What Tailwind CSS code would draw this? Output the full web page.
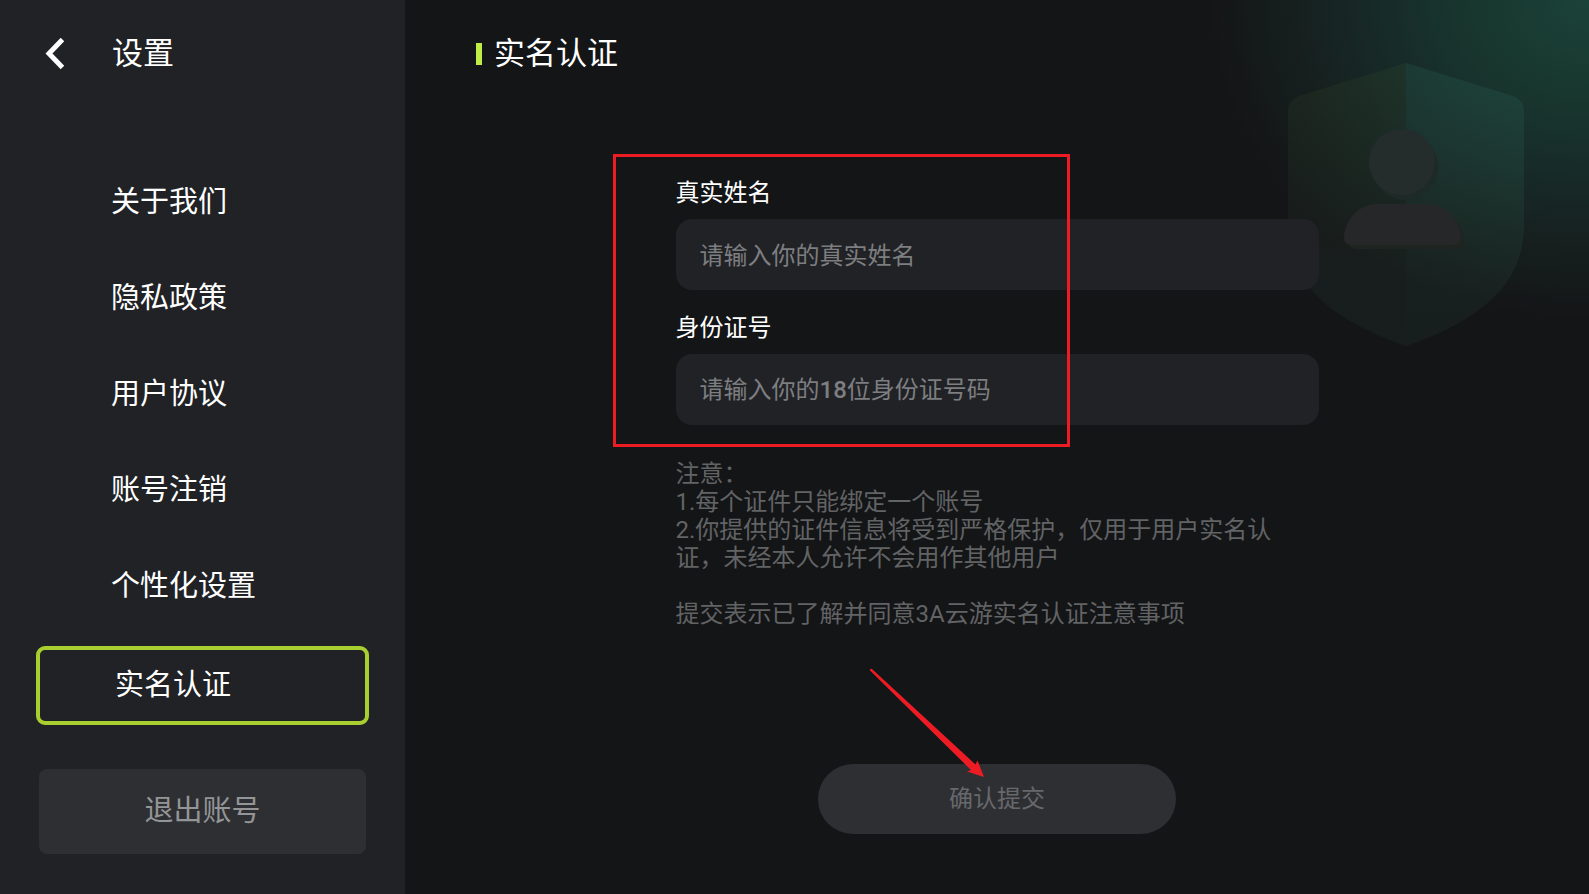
<!DOCTYPE html>
<html lang="zh-CN">

<head>
  <meta charset="UTF-8">
  <meta name="viewport" content="width=device-width, initial-scale=1.0">
  <title>实名认证</title>
  <script src="https://cdn.jsdelivr.net/npm/@tailwindcss/browser@4"></script>
</head>

<body class="flex min-h-screen bg-[#141517] text-white font-['Roboto','Noto_Sans_CJK_SC',sans-serif]">
  <!-- Sidebar -->
  <aside class="w-[405px] shrink-0 bg-[#212226] px-9">
    <header class="flex h-[108px] items-center gap-12 pl-2">
      <button type="button" aria-label="返回">
        <svg class="block h-8 w-5" viewBox="0 0 20 32" fill="none" stroke="#fff" stroke-width="5">
          <path d="M18.5 1.500 L5 15.500 L18.5 29.500" />
        </svg>
      </button>
      <h1 class="text-[31px] leading-10">设置</h1>
    </header>
    <nav class="mt-[47px] flex flex-col text-[29px]">
      <a href="#about" class="flex h-24 items-center pl-[75px]">关于我们</a>
      <a href="#privacy" class="flex h-24 items-center pl-[75px]">隐私政策</a>
      <a href="#terms" class="flex h-24 items-center pl-[75px]">用户协议</a>
      <a href="#cancel" class="flex h-24 items-center pl-[75px]">账号注销</a>
      <a href="#custom" class="flex h-24 items-center pl-[75px]">个性化设置</a>
      <a href="#realname" aria-current="page" class="mt-[11px] flex h-[79px] items-center rounded-[9px] border-4 border-[#a8cf2f] pl-[75px]">实名认证</a>
    </nav>
    <div class="mt-11 px-[3px]">
      <button type="button" class="h-[85px] w-full rounded-lg bg-[#2e2f33] text-[29px] text-[#949597]">退出账号</button>
    </div>
  </aside>

  <!-- Content -->
  <main class="relative flex-1 overflow-hidden">
    <!-- Glow and shield in the corner -->
    <div class="absolute top-0 right-0 h-[330px] w-[400px] bg-[radial-gradient(ellipse_380px_320px_at_100%_0%,#1b4239_0%,#18382f_28%,#172a28_56%,#161f1e_78%,#141517_100%)]"></div>
    <svg class="absolute top-[62px] right-16 h-[285px] w-[238px]" viewBox="0 0 238 285" aria-hidden="true">
      <defs>
        <linearGradient id="shieldLeft" x1="0" y1="0" x2="0" y2="1">
          <stop offset="0" stop-color="#4a6428" stop-opacity=".13" />
          <stop offset=".45" stop-color="#3c6440" stop-opacity=".1" />
          <stop offset="1" stop-color="#346c58" stop-opacity=".1" />
        </linearGradient>
        <linearGradient id="shieldRight" x1="0" y1="0" x2="0" y2="1">
          <stop offset="0" stop-color="#3c9080" stop-opacity=".14" />
          <stop offset=".5" stop-color="#3c8060" stop-opacity=".13" />
          <stop offset="1" stop-color="#346c58" stop-opacity=".1" />
        </linearGradient>
      </defs>
      <path d="M119 1 L12 34 Q1 38 1 49 V163 C1 223 45 258 119 284 Z" fill="url(#shieldLeft)" />
      <path d="M119 1 L226 34 Q237 38 237 49 V163 C237 223 193 258 119 284 Z" fill="url(#shieldRight)" />
      <circle cx="118" cy="105" r="33" fill="#1e2a27" />
      <circle cx="115" cy="100" r="33" fill="#242d2b" />
      <path d="M60 177 C64 157 78 147 95 147 H145 C163 147 177 163 177 182 Q177 187 171 187 H68 Q65 187 62 184 Z" fill="#1f2421" />
      <path d="M57 175 C58 157 72 142 90 142 H141 C159 142 173 157 174 175 Q174 183 167 183 H64 Q57 183 57 175 Z" fill="#252728" />
    </svg>

    <div class="relative px-[71px]">
      <h2 class="flex h-[108px] items-center gap-3 text-[31px] leading-10">
        <span class="h-[22px] w-1.5 bg-[#c0ec48]"></span>实名认证
      </h2>

      <form class="mx-auto mt-[66px] max-w-[643px]">
        <div class="relative flex flex-col">
          <label for="name" class="h-[45px] text-[24px] leading-[38px]">真实姓名</label>
          <input id="name" type="text" placeholder="请输入你的真实姓名" class="h-[71px] w-full rounded-2xl bg-[#212226] px-6 pt-0.5 text-[24px] outline-none placeholder:text-[#7d7e80]">
          <label for="idcard" class="mt-[19px] h-[45px] text-[24px] leading-[38px]">身份证号</label>
          <input id="idcard" type="text" placeholder="请输入你的18位身份证号码" class="h-[71px] w-full rounded-2xl bg-[#212226] px-6 font-['Roboto_Medium','Roboto','Noto_Sans_CJK_SC',sans-serif] text-[24px] outline-none placeholder:text-[#7d7e80]">
          <!-- Red frame round both fields -->
          <div class="pointer-events-none absolute -top-5 -bottom-[22px] -left-[63px] w-[457px] border-3 border-[#ed1c24]"></div>
        </div>

        <div class="mt-[35px] pr-8 text-[24px] leading-7 text-[#626365]">
          <p>注意：</p>
          <p>1.每个证件只能绑定一个账号</p>
          <p>2.你提供的证件信息将受到严格保护，仅用于用户实名认证，未经本人允许不会用作其他用户</p>
          <p class="mt-7">提交表示已了解并同意3A云游实名认证注意事项</p>
        </div>

        <div class="relative mx-auto mt-[136px] w-[358px]">
          <button type="submit" class="h-[70px] w-full rounded-full bg-[#2e2f33] text-[24px] text-[#67686b]">确认提交</button>
          <!-- Red arrow -->
          <svg class="pointer-events-none absolute -top-[95px] left-[52px] h-[109px] w-[115px]" viewBox="0 0 115 109" aria-hidden="true">
            <path d="M0 0 L2 0 L105.500 95.500 L107.500 91.500 L114 108 L97 102.500 L101 101 L0 1.500 Z" fill="#ed1c24" />
          </svg>
        </div>
      </form>
    </div>
  </main>
</body>

</html>
